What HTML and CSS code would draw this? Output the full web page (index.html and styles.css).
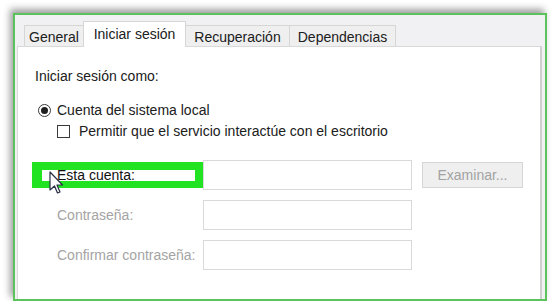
FILE: index.html
```html
<!DOCTYPE html>
<html lang="es">
<head>
<meta charset="utf-8">
<title>Iniciar sesión</title>
<link rel="stylesheet" href="styles.css">
</head>
<body>
<div class="window">
  <div class="tabs">
    <div class="tab tab-general">General</div>
    <div class="tab tab-active">Iniciar sesión</div>
    <div class="tab tab-recup">Recuperación</div>
    <div class="tab tab-dep">Dependencias</div>
  </div>
  <div class="panel">
    <div class="title">Iniciar sesión como:</div>
    <div class="radio-row">
      <span class="radio"><span class="dot"></span></span>
      <span>Cuenta del sistema local</span>
    </div>
    <div class="check-row">
      <span class="check"></span>
      <span>Permitir que el servicio interactúe con el escritorio</span>
    </div>
    <div class="form">
      <div class="label label-on">Esta cuenta:</div>
      <div class="field"></div>
      <div class="button">Examinar...</div>
      <div class="label">Contraseña:</div>
      <div class="field"></div>
      <div></div>
      <div class="label">Confirmar contraseña:</div>
      <div class="field"></div>
      <div></div>
    </div>
    <div class="highlight"></div>
    <svg class="cursor" width="15" height="24" viewBox="0 0 15 24">
      <path d="M1 1 L1 19 L5.5 15 L8.5 22 L11 21 L8 14 L13.5 14 Z" fill="#fff" stroke="#2a2f45" stroke-width="1.2" stroke-linejoin="round"/>
    </svg>
  </div>
</div>
</body>
</html>
```
FILE: styles.css
```css
html, body {
  margin: 0;
  padding: 0;
  background: #ffffff;
}
body {
  font-family: "Liberation Sans", Arial, sans-serif;
  font-size: 14px;
  color: #202020;
}
.window {
  margin: 13px 0 0 13px;
  width: 530px;
  height: 284px;
  border: 2px solid #5cc35c;
  background: #f1f0f3;
  box-shadow: -3px -4px 7px rgba(0, 0, 0, 0.38);
  overflow: hidden;
  display: flex;
  flex-direction: column;
}
.tabs {
  height: 31px;
  padding-left: 9px;
  display: flex;
  align-items: flex-end;
  flex-shrink: 0;
}
.tab {
  box-sizing: border-box;
  height: 21px;
  border: 1px solid #d6d6d6;
  border-bottom: none;
  background: #efefef;
  padding-top: 2px;
  line-height: 18px;
  text-align: center;
  margin-left: -1px;
}
.tab-general { width: 60px; margin-left: 0; }
.tab-active {
  width: 103px;
  height: 26px;
  margin-bottom: -1px;
  padding-top: 3px;
  background: #ffffff;
  position: relative;
  z-index: 1;
}
.tab-recup { width: 105px; }
.tab-dep { width: 107px; }
.panel {
  flex: 1;
  position: relative;
  margin: 0 3px 0 2px;
  background: #ffffff;
  border: 1px solid #d9d9d9;
  border-right: 2px solid #cfcfcf;
  border-bottom: none;
  padding: 21px 0 0 17px;
}
.title {
  line-height: 16px;
}
.radio-row {
  margin-top: 18px;
  display: flex;
  align-items: center;
  line-height: 16px;
}
.radio {
  box-sizing: border-box;
  width: 13px;
  height: 13px;
  margin: 0 6px 0 3px;
  border: 1px solid #3a3a3a;
  border-radius: 50%;
  background: #fff;
  display: flex;
  align-items: center;
  justify-content: center;
}
.dot {
  width: 7px;
  height: 7px;
  border-radius: 50%;
  background: #1f1f1f;
}
.check-row {
  margin-top: 5px;
  margin-left: 22px;
  display: flex;
  align-items: center;
  line-height: 16px;
}
.check {
  box-sizing: border-box;
  width: 13px;
  height: 13px;
  margin-right: 9px;
  border: 1px solid #3a3a3a;
  background: #fff;
}
.form {
  margin-top: 21px;
  margin-left: 22px;
  display: grid;
  grid-template-columns: 136px 209px 101px;
  grid-auto-rows: 30px;
  column-gap: 10px;
  row-gap: 10px;
  align-items: center;
}
.label {
  color: #a4a4a4;
  line-height: 16px;
  white-space: nowrap;
}
.label-on {
  color: #111111;
  position: relative;
  z-index: 2;
}
.field {
  box-sizing: border-box;
  height: 30px;
  border: 1px solid #d9d9d9;
  background: #fff;
}
.button {
  box-sizing: border-box;
  height: 26px;
  border: 1px solid #d6d6d6;
  background: #efefef;
  color: #a2a2a2;
  line-height: 24px;
  text-align: center;
}
.highlight {
  position: absolute;
  left: 14px;
  top: 115px;
  width: 153px;
  height: 11px;
  border: 8px solid #22e322;
  border-left-width: 10px;
  border-bottom-width: 7px;
  background: #ffffff;
  z-index: 1;
}
.cursor {
  position: absolute;
  left: 31px;
  top: 124px;
  z-index: 3;
}
```
